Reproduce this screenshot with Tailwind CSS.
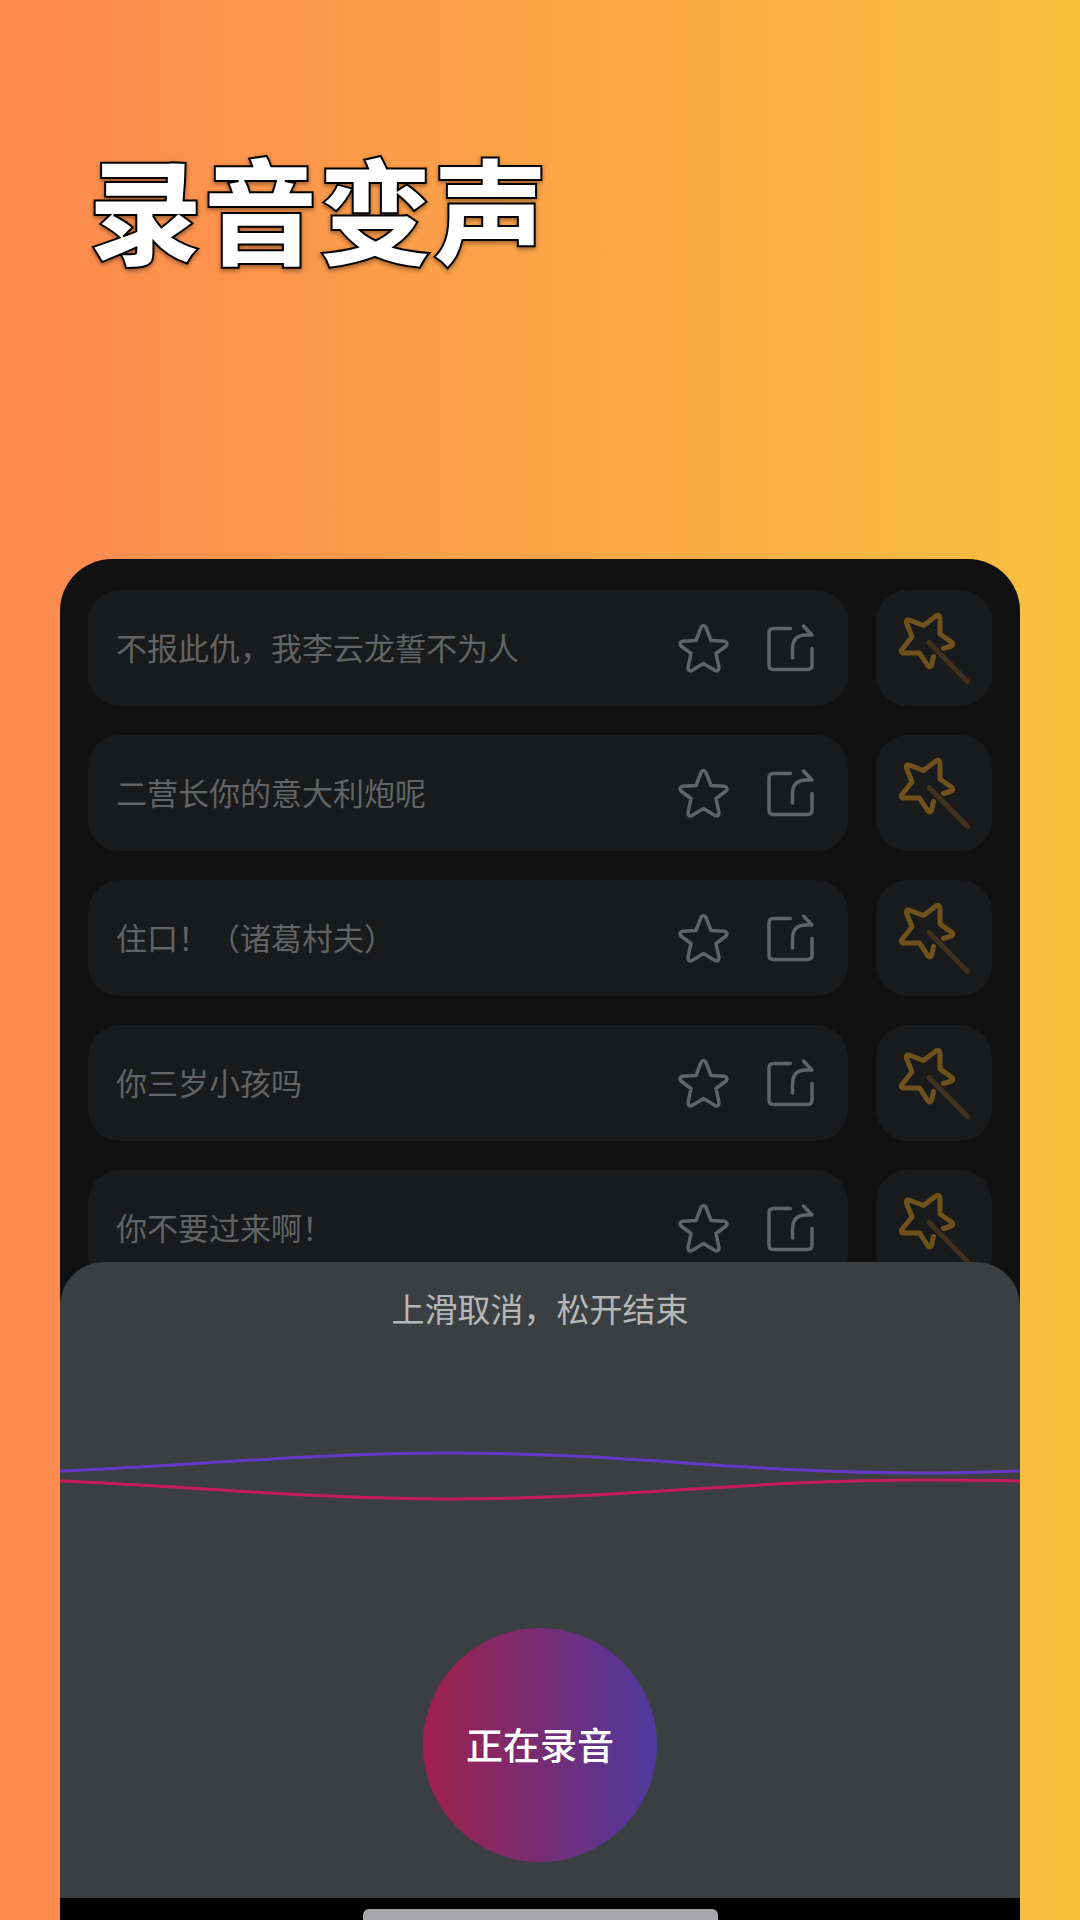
<!doctype html>
<html lang="zh-CN">

<head>
	<meta charset="UTF-8">
	<meta name="viewport" content="width=device-width, initial-scale=1.0">
	<title>录音变声</title>
	<!-- Tailwind -->
	<script src="https://cdn.jsdelivr.net/npm/@tailwindcss/browser@4"></script>
</head>

<body class="min-h-screen bg-linear-to-r/srgb from-[#fd8850] to-[#f9c03e] font-['Noto_Sans_CJK_SC','Noto_Sans',sans-serif]">

	<!-- Shared icons -->
	<svg class="hidden" aria-hidden="true">
		<symbol id="icon-star" viewBox="18 12 52 52">
			<path d="M41 17.5Q43.5 13.5 46 17.5L51 30.5L64.500 31.300Q68.500 32.500 66 36L56 43.500L59 57.500Q59 62 55 60.500L43.500 53.500L32 60.500Q28 62 28 57.500L31 43.500L21 36Q18.500 32.500 22.500 31.300L36 30.5Z"
				fill="none" stroke="currentColor" stroke-width="3.5" stroke-linejoin="round" />
		</symbol>
		<symbol id="icon-share" viewBox="104 12 52 52">
			<path d="M130.500 18.500H113.500Q109 18.500 109 23V55Q109 59.500 113.500 59.500H147.500Q152 59.500 152 55V38.500M132.500 48V39Q132.500 25 146 25H152L143.500 16"
				fill="none" stroke="currentColor" stroke-width="3.5" stroke-linecap="round" stroke-linejoin="round" />
		</symbol>
		<symbol id="icon-wand" viewBox="-4 -5 116 116">
			<path d="M49 47.500L87.500 86.500" fill="none" stroke="#3f311e" stroke-width="5" stroke-linecap="round" />
			<path d="M63.500 53.500L71.500 51Q73.500 49.500 72 47.500L60 39V23Q59.500 19 56 21L43.500 30.500L29 25Q25.500 24.500 26.500 28L32 42L21.500 55Q20.500 57.500 23 58H39.500L48 71Q50 73 51.500 70.500L53.500 61.500"
				fill="none" stroke="#6f521b" stroke-width="5" stroke-linecap="round" stroke-linejoin="round" />
		</symbol>
	</svg>

	<header class="px-[88px] pt-[149px] pb-[295px]">
		<h1
			class="text-[115px] leading-[115px] font-black text-white [-webkit-text-stroke:2px_black] [filter:drop-shadow(0_2px_2px_rgb(0_0_0/0.4))]">
			录音变声</h1>
	</header>

	<main class="mx-[60px] overflow-hidden rounded-t-[52px] bg-[#111112]">
		<ul id="list" class="flex flex-col gap-[29px] px-7 pt-[31px] text-[#626364]"></ul>

		<!-- Recording sheet -->
		<section class="relative -mt-6 flex flex-col items-center rounded-t-[44px] bg-[#3c3f41] pt-[22px] pb-9">
			<p class="text-[33px] leading-[48px] text-[#b5b7b8]">上滑取消，松开结束</p>
			<svg class="mt-[108px] h-20 w-full" viewBox="0 0 960 80" preserveAspectRatio="none" fill="none"
				stroke-width="3" aria-hidden="true">
				<path d="M0 31C130 26 250 13 390 13C570 13 680 33 865 33C900 33 930 32 960 31" stroke="#6439c8" />
				<path d="M0 41C130 46 250 59 390 59C570 59 680 40 865 40C900 40 930 40 960 41" stroke="#c71c59" />
			</svg>
			<button type="button"
				class="mt-[108px] size-[234px] rounded-full bg-linear-to-r/srgb from-[#a0204a] to-[#4e399f] text-[37px] font-medium text-white">正在录音</button>
		</section>

		<!-- Home indicator -->
		<div class="flex justify-center bg-black pt-[11px]">
			<div class="h-[11px] w-[355px] rounded-t-md bg-[#a7a7a9]"></div>
		</div>
	</main>

	<script>

		const phrases = [
			"不报此仇，我李云龙誓不为人",
			"二营长你的意大利炮呢",
			"住口！（诸葛村夫）",
			"你三岁小孩吗",
			"你不要过来啊！"
		];

		listPhrases(phrases);

		function listPhrases(phrases) {
			const list = document.getElementById("list");

			for (let i = 0; i < phrases.length; i++) {
				list.insertAdjacentHTML("beforeend",
					'<li class="flex gap-7">' +
					'<div class="flex h-[116px] min-w-0 flex-1 items-center rounded-[32px] bg-[#191a1b] pr-8 pl-7">' +
					'<span class="flex-1 pb-0.5 text-[31px] leading-[48px]">' + phrases[i] + '</span>' +
					'<button type="button" aria-label="收藏" class="mr-[34px]"><svg class="size-[52px]"><use href="#icon-star" /></svg></button>' +
					'<button type="button" aria-label="分享"><svg class="size-[52px]"><use href="#icon-share" /></svg></button>' +
					'</div>' +
					'<button type="button" aria-label="变声" class="size-[116px] rounded-[32px] bg-[#191a1b]"><svg class="size-full"><use href="#icon-wand" /></svg></button>' +
					'</li>'
				);
			}
		}

	</script>

</body>

</html>
